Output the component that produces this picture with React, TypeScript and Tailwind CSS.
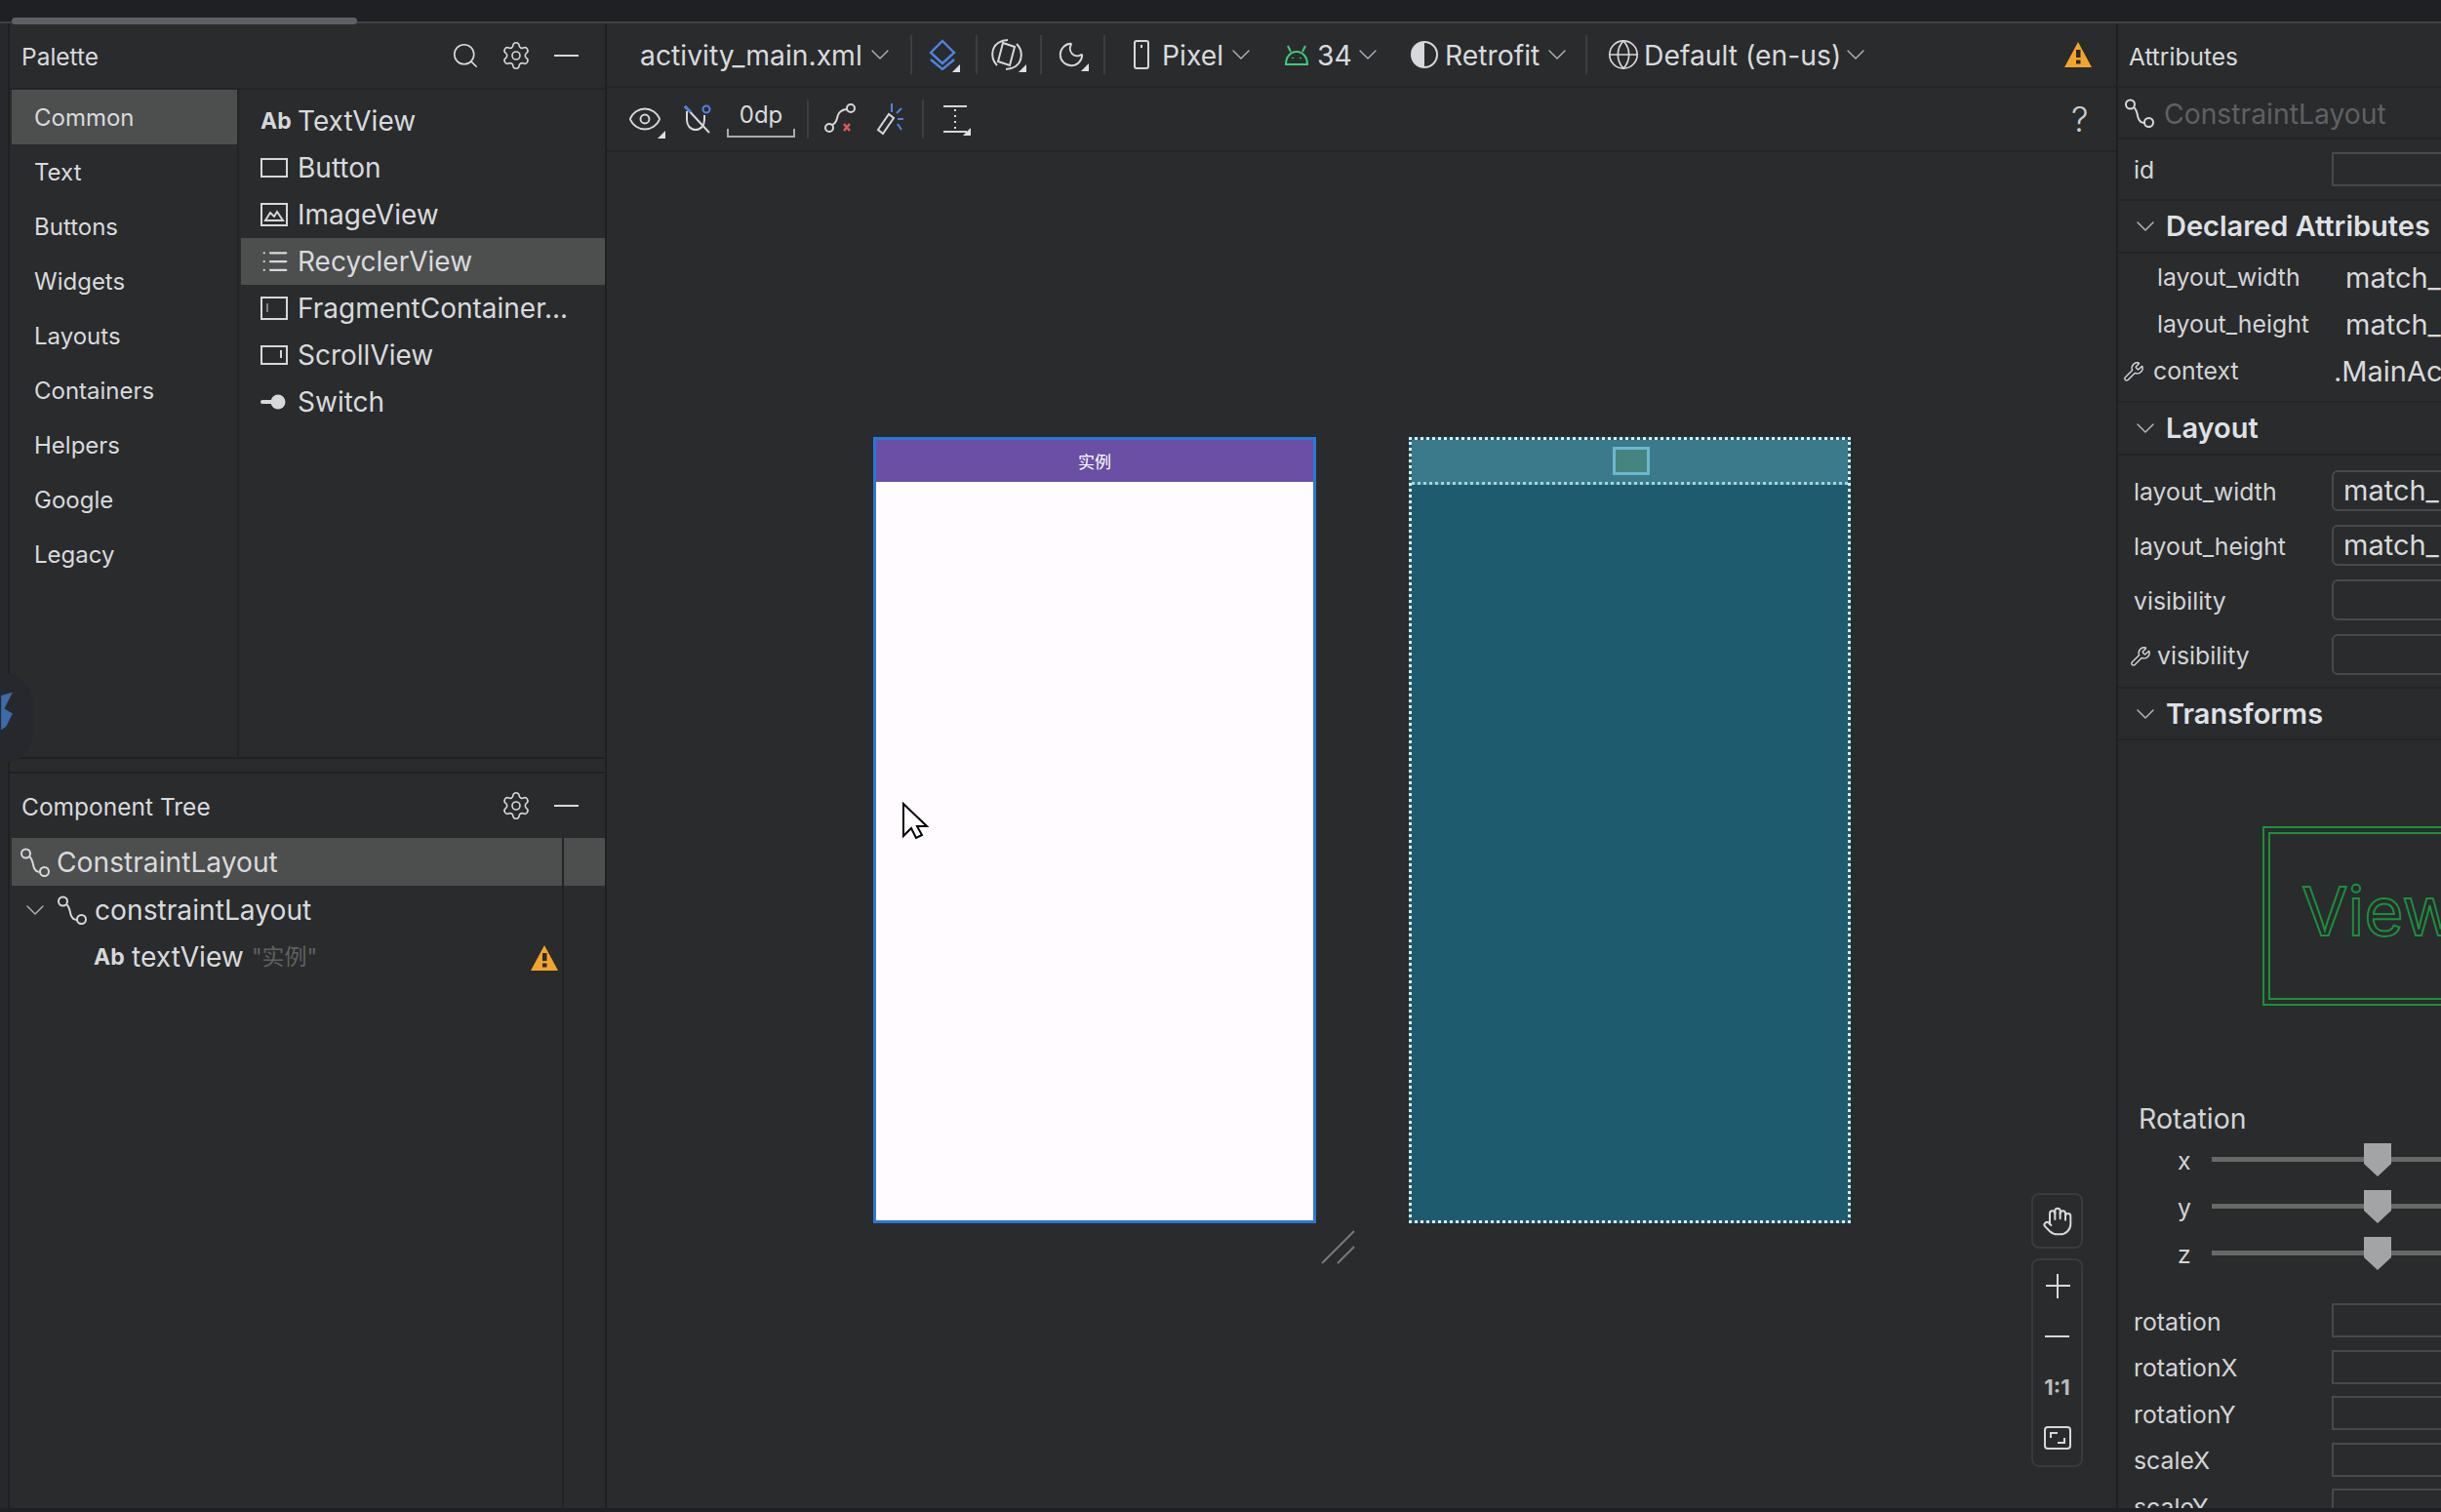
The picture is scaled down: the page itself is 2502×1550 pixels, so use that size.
import React from 'react';
import { ChevronDown, Eye, Globe, Hand, List, Moon, Search, Settings, Wrench } from 'lucide-react';

const stroke = '#d6d8db';

const Corner = () => (
    <span className="absolute right-[-3px] bottom-[-2px] w-0 h-0 border-l-[8px] border-l-transparent border-b-[8px] border-b-[#dfe1e5]" />
);

const Chevron = ({ className = '' }: { className?: string }) => (
    <ChevronDown size={32} strokeWidth={1} color="#b4b6b9" className={`shrink-0 ${className}`} />
);

const ConstraintIcon = ({ size = 30 }: { size?: number }) => (
    <svg width={size} height={size} viewBox="0 0 30 30" fill="none" stroke={stroke} strokeWidth="2">
        <circle cx="5.5" cy="6" r="4.5" />
        <circle cx="24.5" cy="24.5" r="4.5" />
        <path d="M9 9c3.500 2.500 3.500 7 4.500 10.500s3 5.500 6.500 5.500" />
    </svg>
);

const Warning = ({ w = 28, h = 26 }: { w?: number; h?: number }) => (
    <svg width={w} height={h} viewBox="0 0 28 26">
        <path d="M14 0 28 26H0Z" fill="#f2a52c" />
        <rect x="12" y="8" width="4.500" height="8" fill="#2b2b2d" />
        <rect x="12" y="18.500" width="4.500" height="4" fill="#2b2b2d" />
    </svg>
);

const AbIcon = () => (
    <span className="w-[30px] text-[23px] font-bold leading-none text-[#d6d8db]">Ab</span>
);

const BoxIcon = ({ children, tall }: { children?: React.ReactNode; tall?: boolean }) => (
    <svg width="28" height={tall ? 24 : 20} viewBox={tall ? '0 0 28 24' : '0 0 28 20'} fill="none" stroke={stroke} strokeWidth="2">
        <rect x="1" y="1" width="26" height={tall ? 22 : 18} />
        {children}
    </svg>
);

const paletteItems: { label: string; icon: React.ReactNode; active?: boolean }[] = [
    { label: 'TextView', icon: <AbIcon /> },
    { label: 'Button', icon: <BoxIcon /> },
    { label: 'ImageView', icon: <BoxIcon tall><path d="M5 18l5-8 4 4 3-5 6 9Z" /></BoxIcon> },
    { label: 'RecyclerView', icon: <List size={30} strokeWidth={1.8} color={stroke} />, active: true },
    { label: 'FragmentContainer...', icon: <BoxIcon tall><path d="M7 7v9" strokeWidth="1" /></BoxIcon> },
    { label: 'ScrollView', icon: <BoxIcon><path d="M21 5v8" /></BoxIcon> },
    {
        label: 'Switch',
        icon: (
            <svg width="26" height="20" viewBox="0 0 26 20" fill="none">
                <path d="M2 10h14" stroke={stroke} strokeWidth="4" strokeLinecap="round" />
                <circle cx="18" cy="10" r="7.500" fill={stroke} />
            </svg>
        ),
    },
];

const categories = ['Common', 'Text', 'Buttons', 'Widgets', 'Layouts', 'Containers', 'Helpers', 'Google', 'Legacy'];

const PanelHeader = ({ title, search }: { title: string; search?: boolean }) => (
    <div className="h-[66px] shrink-0 flex items-center pl-[12px] pr-[27px] text-[24.500px] text-[#d8dadd]">
        <span className="flex-1 pt-[3px]">{title}</span>
        {search && <Search size={30} strokeWidth={1.3} color={stroke} className="mr-[21px]" />}
        <Settings size={32} strokeWidth={1.2} color={stroke} />
        <span className="ml-[23px] w-[25px] h-[2px] bg-[#d6d8db]" />
    </div>
);

const Sep = ({ className = '' }: { className?: string }) => <span className={`w-[2px] h-[40px] shrink-0 bg-[#3c3e40] ${className}`} />;

const LeftPanel = () => (
    <div className="w-[612px] shrink-0 flex flex-col border-r-2 border-[#1f2023]">
        <div className="h-[754px] shrink-0 flex flex-col border-b-2 border-[#1f2023]">
            <div className="border-b-2 border-[#232427]"><PanelHeader title="Palette" search /></div>
            <div className="flex flex-1 min-h-0">
                <div className="w-[235px] shrink-0 border-r-2 border-[#232427] pl-[2px]">
                    {categories.map((c, i) => (
                        <div key={c} className={`h-[56px] flex items-center pl-[23px] pt-[1px] text-[24px] text-[#d8dadd] ${i === 0 ? 'bg-[#4d4e4e]' : ''}`}>{c}</div>
                    ))}
                </div>
                <div className="flex-1 pt-[8px] pl-[2px]">
                    {paletteItems.map((p) => (
                        <div key={p.label} className={`h-[48px] flex items-center pl-[20px] text-[28px] text-[#d8dadd] whitespace-nowrap ${p.active ? 'bg-[#4d4e4e]' : ''}`}>
                            <span className="w-[38px] flex items-center">{p.icon}</span>
                            {p.label}
                        </div>
                    ))}
                </div>
            </div>
        </div>
        <div className="h-[15px] shrink-0 border-b-2 border-[#1f2023]" />
        <PanelHeader title="Component Tree" />
        <div className="flex-1 flex flex-col pl-[2px] relative">
            <div className="h-[49px] flex items-center pl-[9px] text-[28.200px] text-[#d8dadd] bg-[#4d4e4e]">
                <ConstraintIcon />
                <span className="ml-[7px] pt-[1px]">ConstraintLayout</span>
            </div>
            <div className="h-[49px] flex items-center pl-[8px] text-[28.200px] text-[#d8dadd]">
                <Chevron />
                <span className="ml-[7px]"><ConstraintIcon /></span>
                <span className="ml-[8px] pt-[1px]">constraintLayout</span>
            </div>
            <div className="h-[49px] flex items-center pl-[84px] pr-[48px] text-[28.200px] text-[#d8dadd]">
                <AbIcon />
                <span className="ml-[9px]">textView</span>
                <span className="ml-[8px] flex-1 text-[23px] text-[#5f6163] font-['Inter','Noto_Sans_CJK_SC',sans-serif]">"实例"</span>
                <Warning />
            </div>
            <span className="absolute top-0 bottom-0 left-[566px] w-[2px] bg-[#232427]" />
        </div>
    </div>
);

const LayersIcon = () => (
    <span className="relative flex">
        <svg width="30" height="32" viewBox="0 0 30 32" fill="none" stroke="#4c85e0" strokeWidth="2.400">
            <path d="M15 2 27 14 15 25 3 14Z" />
            <path d="M3 21l12 10 12-10" />
        </svg>
        <Corner />
    </span>
);

const RotateIcon = () => (
    <span className="relative flex">
        <svg width="34" height="32" viewBox="0 0 34 32" fill="none" stroke={stroke} strokeWidth="2">
            <path d="M13 4 25 8 20 27 8 23Z" />
            <path d="M7 27C0 20 1 9 8 4c3-2 7-3 10-3M27 5c7 7 6 18-1 23-3 2-6 3-10 3" />
        </svg>
        <Corner />
    </span>
);

const Toolbar = () => (
    <div className="h-[66px] shrink-0 flex items-center border-b-2 border-[#232427] pl-[34px] text-[28.300px] text-[#d8dadd] whitespace-nowrap">
        <span className="w-[230px] shrink-0 pt-[2px]">activity_main.xml</span>
        <Chevron />
        <Sep className="ml-[15px]" />
        <span className="ml-[16px]"><LayersIcon /></span>
        <Sep className="ml-[19px]" />
        <span className="ml-[13px]"><RotateIcon /></span>
        <Sep className="ml-[17px]" />
        <span className="ml-[15px] relative flex">
            <Moon size={30} strokeWidth={1.500} color={stroke} />
            <Corner />
        </span>
        <Sep className="ml-[18px]" />
        <svg className="ml-[29px] shrink-0" width="16" height="30" viewBox="0 0 16 30" fill="none" stroke={stroke} strokeWidth="2">
            <rect x="1" y="1" width="14" height="28" rx="2" />
            <path d="M8 5v3" />
        </svg>
        <span className="ml-[13px] w-[61px] shrink-0 pt-[2px]">Pixel</span>
        <Chevron className="ml-[4px]" />
        <svg className="ml-[28px] shrink-0" width="26" height="24" viewBox="0 0 26 24" fill="none" stroke="#3fcb7a" strokeWidth="2">
            <path d="M2 22c0-8 5-13 11-13s11 5 11 13Z" />
            <path d="M7 9 4 3M19 9l3-6M9 15v1M17 15v1" />
        </svg>
        <span className="ml-[8px] w-[34px] shrink-0 pt-[2px]">34</span>
        <Chevron className="ml-[2px]" />
        <svg className="ml-[28px] shrink-0" width="28" height="28" viewBox="0 0 28 28">
            <circle cx="14" cy="14" r="13" fill="none" stroke={stroke} strokeWidth="2" />
            <path d="M14 1a13 13 0 0 0 0 26Z" fill={stroke} />
        </svg>
        <span className="ml-[7px] w-[98px] shrink-0 pt-[2px]">Retrofit</span>
        <Chevron className="ml-[1px]" />
        <Sep className="ml-[13px]" />
        <Globe size={34} strokeWidth={1.200} color={stroke} className="ml-[20px] shrink-0" />
        <span className="ml-[4px] w-[198px] shrink-0 pt-[2px]">Default (en-us)</span>
        <Chevron className="ml-[3px]" />
        <span className="ml-[198px] flex"><Warning /></span>
    </div>
);

const SubToolbar = () => (
    <div className="h-[66px] shrink-0 flex items-center border-b-2 border-[#232427] pl-[21px] text-[24px] text-[#d8dadd]">
        <span className="relative flex">
            <Eye size={36} strokeWidth={1.300} color={stroke} />
            <Corner />
        </span>
        <svg className="ml-[21px] shrink-0" width="30" height="32" viewBox="0 0 30 32" fill="none" strokeWidth="2">
            <path d="M4 8v9c0 6 4 10 9 10s9-4 9-10V12" stroke={stroke} />
            <path d="M2 3 27 30" stroke={stroke} />
            <path d="M2 3l6 6" stroke="#4c85e0" strokeWidth="3" />
            <circle cx="24" cy="6" r="3.500" stroke="#4c85e0" />
        </svg>
        <span className="ml-[15px] w-[70px] h-[38px] shrink-0 flex justify-center items-start leading-[30px] border-b-2 border-x-2 border-[#a9abae] [border-image:linear-gradient(to_top,#a9abae_8px,transparent_8px)_1]">0dp</span>
        <Sep className="ml-[12px]" />
        <svg className="ml-[16px] shrink-0" width="32" height="32" viewBox="0 0 32 32" fill="none" stroke={stroke} strokeWidth="2">
            <circle cx="5" cy="25" r="4" />
            <circle cx="27" cy="5" r="4" />
            <path d="M8 22c6-2 4-8 7-12s6-4 9-4" />
            <path d="M20 21l6 7M26 21l-6 7" stroke="#e0575b" strokeWidth="2.600" />
        </svg>
        <svg className="ml-[21px] shrink-0" width="30" height="34" viewBox="0 0 30 34" fill="none" strokeWidth="2">
            <path d="M2 28 13 12l5 4L7 32Z" stroke={stroke} />
            <path d="M16 1v9M28 17h-6M26 6l-5 5M26 28l-4-6" stroke="#4c85e0" />
        </svg>
        <Sep className="ml-[17px]" />
        <span className="ml-[19px] relative flex">
            <svg width="26" height="30" viewBox="0 0 26 30" fill="none" stroke={stroke} strokeWidth="2">
                <path d="M1 2h24M1 28h24" />
                <path d="M13 5v20" strokeDasharray="2 4" />
            </svg>
            <Corner />
        </span>
        <span className="ml-[1131px] text-[35px] leading-none text-[#c9cbce] font-light">?</span>
    </div>
);

const Canvas = () => (
    <div className="flex-1 relative overflow-hidden pl-[273px] pt-[292px]">
        <div className="flex gap-[95px]">
            <div className="w-[454px] h-[806px] border-[3px] border-[#2a78d6] bg-[#fffbfe] flex flex-col">
                <div className="h-[43px] bg-[#6a4fa5] flex items-center justify-center text-[17px] text-white font-['Noto_Sans_CJK_SC',sans-serif]">实例</div>
            </div>
            <div className="w-[453px] h-[806px] border-[3px] border-dotted border-[#dcecef] bg-[#1f5b6f] flex flex-col">
                <div className="h-[46px] bg-[#3a7a8a] border-b-[3px] border-dotted border-[#a5d3de] flex items-center justify-center pl-[3px]">
                    <span className="w-[38px] h-[29px] border-[3px] border-[#6cb8cf] bg-[#46847f]" />
                </div>
            </div>
        </div>
        {/* mouse pointer over the design surface */}
        <svg className="absolute left-[302px] top-[666px]" width="28" height="40" viewBox="0 0 28 40" fill="#fff" stroke="#000" strokeWidth="2">
            <path d="M2 2v33l8-8 5 10 6-3-5-9h10Z" />
        </svg>
        {/* resize handle */}
        <svg className="absolute left-[732px] top-[1104px]" width="36" height="36" viewBox="0 0 36 36" stroke="#77797b" strokeWidth="2">
            <path d="M1 35 34 2M17 35 34 18" />
        </svg>
        <div className="absolute left-[1460px] top-[1067px] flex flex-col gap-[10px]">
            <div className="w-[53px] h-[57px] border-2 border-[#393b40] rounded-[8px] flex items-center justify-center">
                <Hand size={32} strokeWidth={1.500} color={stroke} />
            </div>
            <div className="w-[53px] h-[214px] border-2 border-[#393b40] rounded-[8px] flex flex-col items-center pt-[7px]">
                <svg className="shrink-0" width="38" height="38" viewBox="0 0 38 38" stroke={stroke} strokeWidth="2"><path d="M7 19h25M19 7v25" /></svg>
                <span className="mt-[32px] w-[25px] h-[2px] bg-[#d6d8db]" />
                <span className="mt-[41px] text-[22px] leading-[20px] font-bold text-[#b9bbbe]">1:1</span>
                <svg className="mt-[30px] shrink-0" width="28" height="24" viewBox="0 0 28 24" fill="none" stroke={stroke} strokeWidth="2">
                    <rect x="1" y="1" width="26" height="22" rx="3" />
                    <path d="M7 12V7h7M21 12v5h-7" />
                </svg>
            </div>
        </div>
    </div>
);

const SectionHeader = ({ title, h = 'h-[54px]' }: { title: string; h?: string }) => (
    <div className={`${h} shrink-0 flex items-center pl-[12px] border-b-2 border-[#232427] text-[29px] font-semibold text-[#dfe1e5]`}>
        <ChevronDown size={32} strokeWidth={1.100} color="#b4b6b9" />
        <span className="ml-[5px]">{title}</span>
    </div>
);

const FieldRow = ({ label, value, tool, rounded, h, inputH }: { label: string; value?: string; tool?: boolean; rounded?: boolean; h: string; inputH: string }) => (
    <div className={`${h} flex items-center text-[24.800px] text-[#d2d4d7] whitespace-nowrap`}>
        <span className={`w-[219px] shrink-0 flex items-center mt-[3px] ${tool ? 'pl-[12px]' : 'pl-[16px]'}`}>
            {tool && <Wrench size={22} strokeWidth={1.500} color={stroke} className="mr-[6px]" />}
            {label}
        </span>
        <span className={`w-[200px] shrink-0 ${inputH} border-2 border-[#47494c] flex items-center pl-[10px] text-[29px] text-[#d8dadd] ${rounded ? 'rounded-[6px]' : ''}`}>{value}</span>
    </div>
);

const PlainRow = ({ label, value, tool }: { label: string; value: string; tool?: boolean }) => (
    <div className="h-[48px] flex items-center text-[24.800px] text-[#d2d4d7] whitespace-nowrap">
        <span className={`shrink-0 flex items-center ${tool ? 'w-[221px] pl-[5px]' : 'w-[233px] pl-[40px]'}`}>
            {tool && <Wrench size={22} strokeWidth={1.500} color={stroke} className="mr-[9px]" />}
            {label}
        </span>
        <span className="text-[29px] text-[#d8dadd]">{value}</span>
    </div>
);

const SliderRow = ({ axis }: { axis: string }) => (
    <div className="h-[48px] flex items-center text-[24.800px] text-[#d2d4d7]">
        <span className="w-[96px] pl-[61px] shrink-0 mt-[6px]">{axis}</span>
        <div className="relative w-[300px] h-[5px] shrink-0 bg-[#666965]">
            <svg className="absolute left-[155px] top-[-14px]" width="30" height="34" viewBox="0 0 30 34">
                <path d="M1 0h28v21L15 34 1 21Z" fill="#a3a4a6" />
            </svg>
        </div>
    </div>
);

const RightPanel = () => (
    <div className="flex-1 min-w-0 overflow-hidden flex flex-col">
        <div className="h-[66px] shrink-0 flex items-center pl-[11px] pt-[4px] border-b-2 border-[#232427] text-[24.500px] text-[#d8dadd]">Attributes</div>
        <div className="h-[53px] shrink-0 flex items-center pl-[7px] border-b-2 border-[#232427] text-[28.300px] text-[#5f6163]">
            <ConstraintIcon />
            <span className="ml-[10px] pt-[3px]">ConstraintLayout</span>
        </div>
        <div className="border-b-2 border-[#232427] shrink-0">
            <FieldRow label="id" h="h-[61px]" inputH="h-[35px]" />
        </div>
        <SectionHeader title="Declared Attributes" />
        <div className="h-[153px] shrink-0 border-b-2 border-[#232427] pt-[1px]">
            <PlainRow label="layout_width" value="match_parent" />
            <PlainRow label="layout_height" value="match_parent" />
            <PlainRow label="context" value=".MainActivity" tool />
        </div>
        <SectionHeader title="Layout" />
        <div className="h-[239px] shrink-0 border-b-2 border-[#232427] pt-[8px]">
            <FieldRow label="layout_width" value="match_parent" rounded h="h-[56px]" inputH="h-[42px]" />
            <FieldRow label="layout_height" value="match_parent" rounded h="h-[56px]" inputH="h-[42px]" />
            <FieldRow label="visibility" rounded h="h-[56px]" inputH="h-[42px]" />
            <FieldRow label="visibility" tool rounded h="h-[56px]" inputH="h-[42px]" />
        </div>
        <SectionHeader title="Transforms" h="h-[53px]" />
        <div className="shrink-0 h-[405px] pt-[88px] pl-[148px]">
            <div className="relative w-[300px] h-[184px] border-[2px] border-[#1c8f3c] text-[69px] leading-[69px] text-transparent [-webkit-text-stroke:2px_#1c8f3c]">
                <div className="absolute left-[4px] top-[4px] bottom-[4px] right-[4px] border-[2px] border-[#1c8f3c] pl-[32px] pt-[45px] font-normal">View</div>
            </div>
            <div className="mt-[100px] -ml-[127px] text-[28.500px] leading-[32px] text-[#d2d4d7]">Rotation</div>
        </div>
        <div className="shrink-0">
            <SliderRow axis="x" />
            <SliderRow axis="y" />
            <SliderRow axis="z" />
        </div>
        <div className="shrink-0 pt-[22px]">
            {['rotation', 'rotationX', 'rotationY', 'scaleX', 'scaleY'].map((l) => (
                <FieldRow key={l} label={l} h="h-[47.500px]" inputH="h-[35px]" />
            ))}
        </div>
    </div>
);

export default function App() {
    return (
        <div className="relative w-[2502px] h-[1550px] overflow-hidden bg-[#2a2b2c] flex flex-col font-['Inter',sans-serif]">
            <div className="h-[24px] shrink-0 bg-[#1f2024] border-b-2 border-[#3e4042] pl-[12px] pt-[18px]">
                <div className="w-[354px] h-[7px] rounded-full bg-[#5d6066]" />
            </div>
            <div className="flex flex-1 min-h-0">
                <div className="w-[10px] shrink-0 bg-[#26282b] border-r-2 border-[#1f2023]" />
                <LeftPanel />
                <div className="w-[1549px] shrink-0 flex flex-col border-r-2 border-[#1f2023]">
                    <Toolbar />
                    <SubToolbar />
                    <Canvas />
                </div>
                <RightPanel />
            </div>
            <div className="h-[4px] shrink-0 bg-[#1f2024]" />
            {/* window peeking in at the left edge */}
            <div className="absolute left-0 top-[690px] w-[34px] h-[92px] bg-[#26282e] rounded-r-[30px] flex items-start pt-[18px]">
                <svg width="14" height="42" viewBox="0 0 14 50" fill="#3d6aa8">
                    <path d="M0 6 14 2 4 22 14 28 6 44 0 48Z" />
                </svg>
            </div>
        </div>
    );
}
